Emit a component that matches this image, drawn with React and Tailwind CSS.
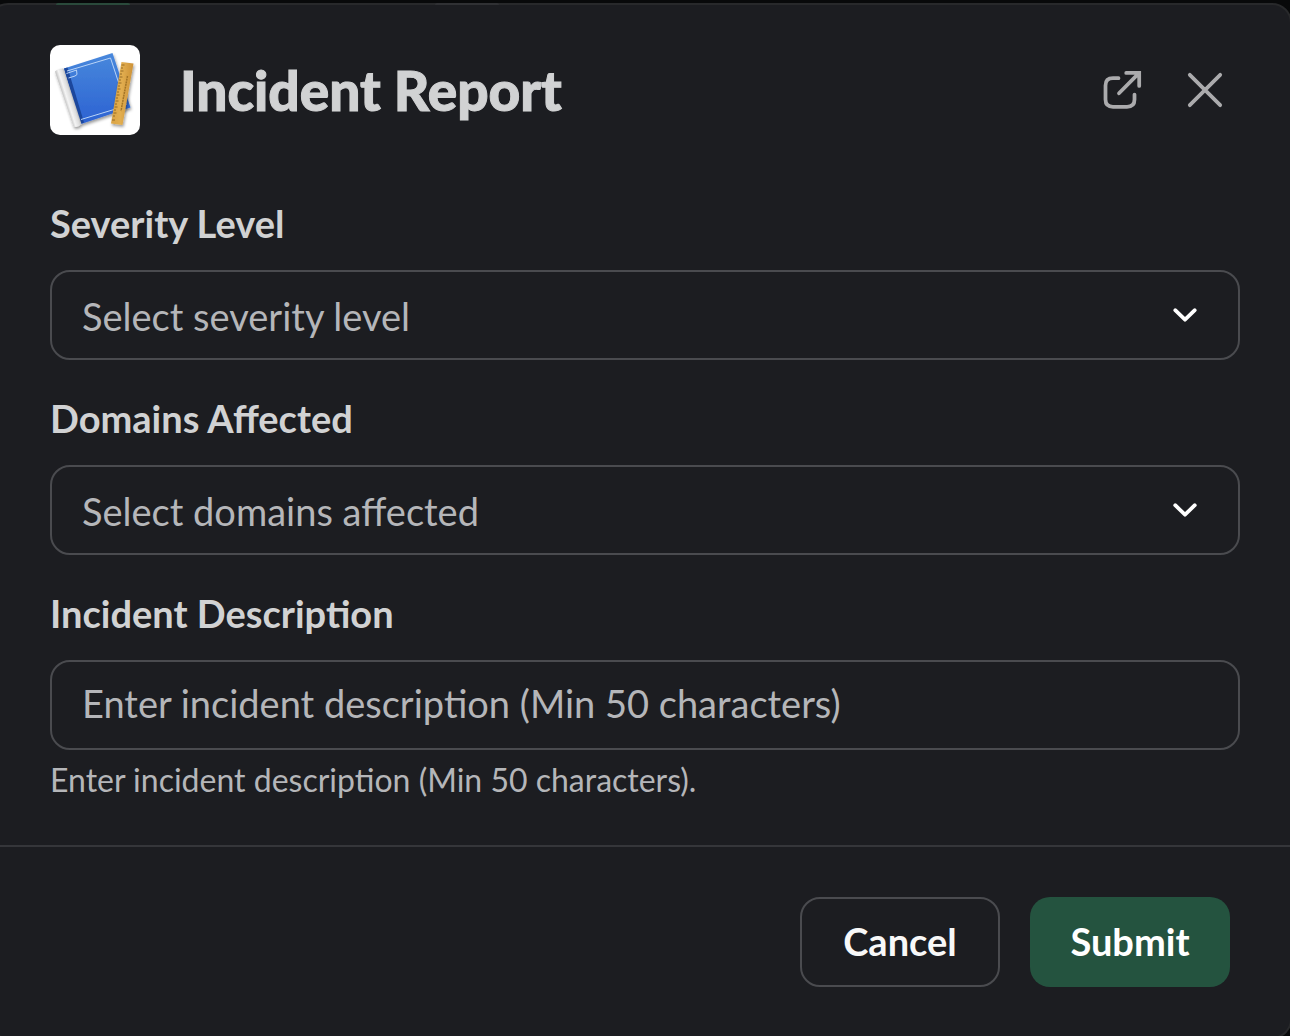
import { useState } from "react";

const severityLevels = ["Critical", "High", "Medium", "Low"];
const domains = ["Network", "Database", "Application", "Security"];

function BlueprintIcon() {
  return (
    <svg viewBox="0 0 90 90" className="size-[90px] shrink-0 rounded-[10px] bg-white" aria-hidden="true">
      <defs>
        <linearGradient id="paper" x1="0" y1="0" x2="0" y2="1">
          <stop offset="0" stopColor="#4888dc" />
          <stop offset="1" stopColor="#2c62d2" />
        </linearGradient>
        <linearGradient id="roll" gradientUnits="userSpaceOnUse" x1="13" y1="54" x2="24" y2="50.500">
          <stop offset="0" stopColor="#b4b4b4" />
          <stop offset="0.35" stopColor="#f4f4f4" />
          <stop offset="0.7" stopColor="#dcdcdc" />
          <stop offset="1" stopColor="#9c9c9c" />
        </linearGradient>
        <linearGradient id="wood" x1="0" y1="0" x2="1" y2="0.1">
          <stop offset="0" stopColor="#d9a140" />
          <stop offset="0.5" stopColor="#e2ae50" />
          <stop offset="1" stopColor="#cc9136" />
        </linearGradient>
        <filter id="soft" x="-20%" y="-20%" width="150%" height="150%">
          <feDropShadow dx="1" dy="2" stdDeviation="1.5" floodColor="#000" floodOpacity="0.4" />
        </filter>
      </defs>
      <g filter="url(#soft)">
        <path d="M14 23.500L62.500 8L80.500 62.500L31 79Z" fill="url(#paper)" />
        <path d="M14 23.500L17.500 22.500L34 77.500L30 79Z" fill="#1c469c" />
        <path d="M17 26L60.500 13L76 60M31 74.500L64 64.500" fill="none" stroke="#b9d4f7" strokeWidth="1" />
        <path d="M16.500 28.500L26.500 25L27 29.500L25 31L18.500 33" fill="none" stroke="#b9d4f7" strokeWidth="1" />
        <path d="M5 26.500Q8 23 13.500 23.500L31.500 79Q27.500 83 23.500 81.500Z" fill="url(#roll)" />
      </g>
      <g filter="url(#soft)">
        <path d="M71.500 17L83.500 18.500L72.500 80L61 78.500Z" fill="url(#wood)" />
        <path
          d="M71.500 20h3M71 23h2M70.500 26h3M70 29h2M69.500 32h3M69 35h2M68.500 38h3M68 41h2M67.500 44h3M67 47h2M66.500 50h3M66 53h2M65.500 56h3M65 59h2M64.500 62h3M64 65h2M63.500 68h3M63 71h2M62 75h3"
          stroke="#835c1c"
          strokeWidth="0.8"
        />
        <path d="M77.500 31L71 66" stroke="#a37427" strokeWidth="1.5" strokeDasharray="2 0.700" />
      </g>
    </svg>
  );
}

function OpenIcon() {
  return (
    <svg viewBox="0 0 50 50" className="size-[50px]" fill="none" stroke="currentColor" strokeWidth="3.750" strokeLinecap="round" aria-hidden="true">
      <path d="M20.500 13.200H15Q7.500 13.200 7.500 20.500V34.500Q7.500 41.800 15 41.800H29Q36.500 41.800 36.500 34.500V29.500" />
      <path d="M28.200 7.900H41.200V20.900M41.200 7.900L21 28.300" />
    </svg>
  );
}

function CloseIcon() {
  return (
    <svg viewBox="0 0 50 50" className="size-[50px]" fill="none" stroke="currentColor" strokeWidth="3.750" strokeLinecap="round" aria-hidden="true">
      <path d="M9.800 9.800L40.200 40.200M40.200 9.800L9.800 40.200" />
    </svg>
  );
}

function SelectField({ id, label, placeholder, options }) {
  const [value, setValue] = useState("");
  return (
    <div className="flex flex-col gap-5">
      <label htmlFor={id} className="pt-px text-[38px] leading-[54px] font-bold">{label}</label>
      <div className="grid items-center">
        <select
          id={id}
          value={value}
          onChange={(e) => setValue(e.target.value)}
          className="col-start-1 row-start-1 h-[90px] w-full appearance-none rounded-[20px] border-2 border-[#4a4b4f] bg-[#1c1d21] pt-0.5 pr-20 pl-[30px] text-[38px] text-[#b5b6b9]"
        >
          <option value="" disabled>{placeholder}</option>
          {options.map((o) => <option key={o}>{o}</option>)}
        </select>
        <svg viewBox="0 0 30 30" className="pointer-events-none col-start-1 row-start-1 mr-10 size-[30px] justify-self-end" fill="none" stroke="#fff" strokeWidth="3.750" strokeLinecap="round" strokeLinejoin="round" aria-hidden="true">
          <path d="M5.200 10.200L15 19.700L24.800 10.200" />
        </svg>
      </div>
    </div>
  );
}

export default function App() {
  return (
    <div className="h-screen overflow-hidden bg-[#08090a] pt-[3px] font-['Lato',sans-serif] text-[#d1d2d3]">
      <div role="dialog" aria-labelledby="dialog-title" className="relative -mr-0.5 -ml-3 min-h-full rounded-[20px] border-2 border-[#28292b] bg-[#1c1d21]">
        <span className="absolute -top-0.5 left-[66px] h-0.5 w-[74px] rounded-t bg-[#2a4a3b]" />
        <span className="absolute -top-0.5 left-[445px] h-0.5 w-[64px] rounded-t bg-[#303134]" />
        <header className="flex items-center pt-10 pr-[50px] pl-[60px]">
          <BlueprintIcon />
          <h1 id="dialog-title" className="ml-10 flex-1 text-[55px] leading-[72px] font-black [-webkit-text-stroke:1px_#d1d2d3]">Incident Report</h1>
          <div className="mr-2.5 flex gap-8 text-[#ababad]">
            <button type="button" aria-label="Open in new window"><OpenIcon /></button>
            <button type="button" aria-label="Close"><CloseIcon /></button>
          </div>
        </header>
        <form onSubmit={(e) => e.preventDefault()}>
          <div className="flex flex-col gap-[30px] pt-[60px] pr-[50px] pb-[42px] pl-[60px]">
            <SelectField id="severity" label="Severity Level" placeholder="Select severity level" options={severityLevels} />
            <SelectField id="domains" label="Domains Affected" placeholder="Select domains affected" options={domains} />
            <div className="flex flex-col">
              <label htmlFor="description" className="mb-5 pt-px text-[38px] leading-[54px] font-bold">Incident Description</label>
              <input
                id="description"
                type="text"
                minLength={50}
                aria-describedby="description-hint"
                placeholder="Enter incident description (Min 50 characters)"
                className="h-[90px] w-full rounded-[20px] border-2 border-[#4a4b4f] bg-[#1c1d21] px-[30px] pb-1 text-[38px] placeholder:text-[#b5b6b9]"
              />
              <p id="description-hint" className="mt-[7px] text-[32px] leading-[46px] text-[#b5b6b9]">Enter incident description (Min 50 characters).</p>
            </div>
          </div>
          <footer className="flex justify-end gap-[30px] border-t-2 border-[#35363a] pt-[50px] pr-[60px] pb-[50px]">
            <button type="button" className="h-[90px] w-[200px] rounded-[20px] border-2 border-[#4a4b4f] pb-0.5 text-[38px] font-bold text-[#f8f8f8]">Cancel</button>
            <button type="submit" className="h-[90px] w-[200px] rounded-[20px] bg-[#24533f] pb-0.5 text-[38px] font-bold text-white">Submit</button>
          </footer>
        </form>
      </div>
    </div>
  );
}
